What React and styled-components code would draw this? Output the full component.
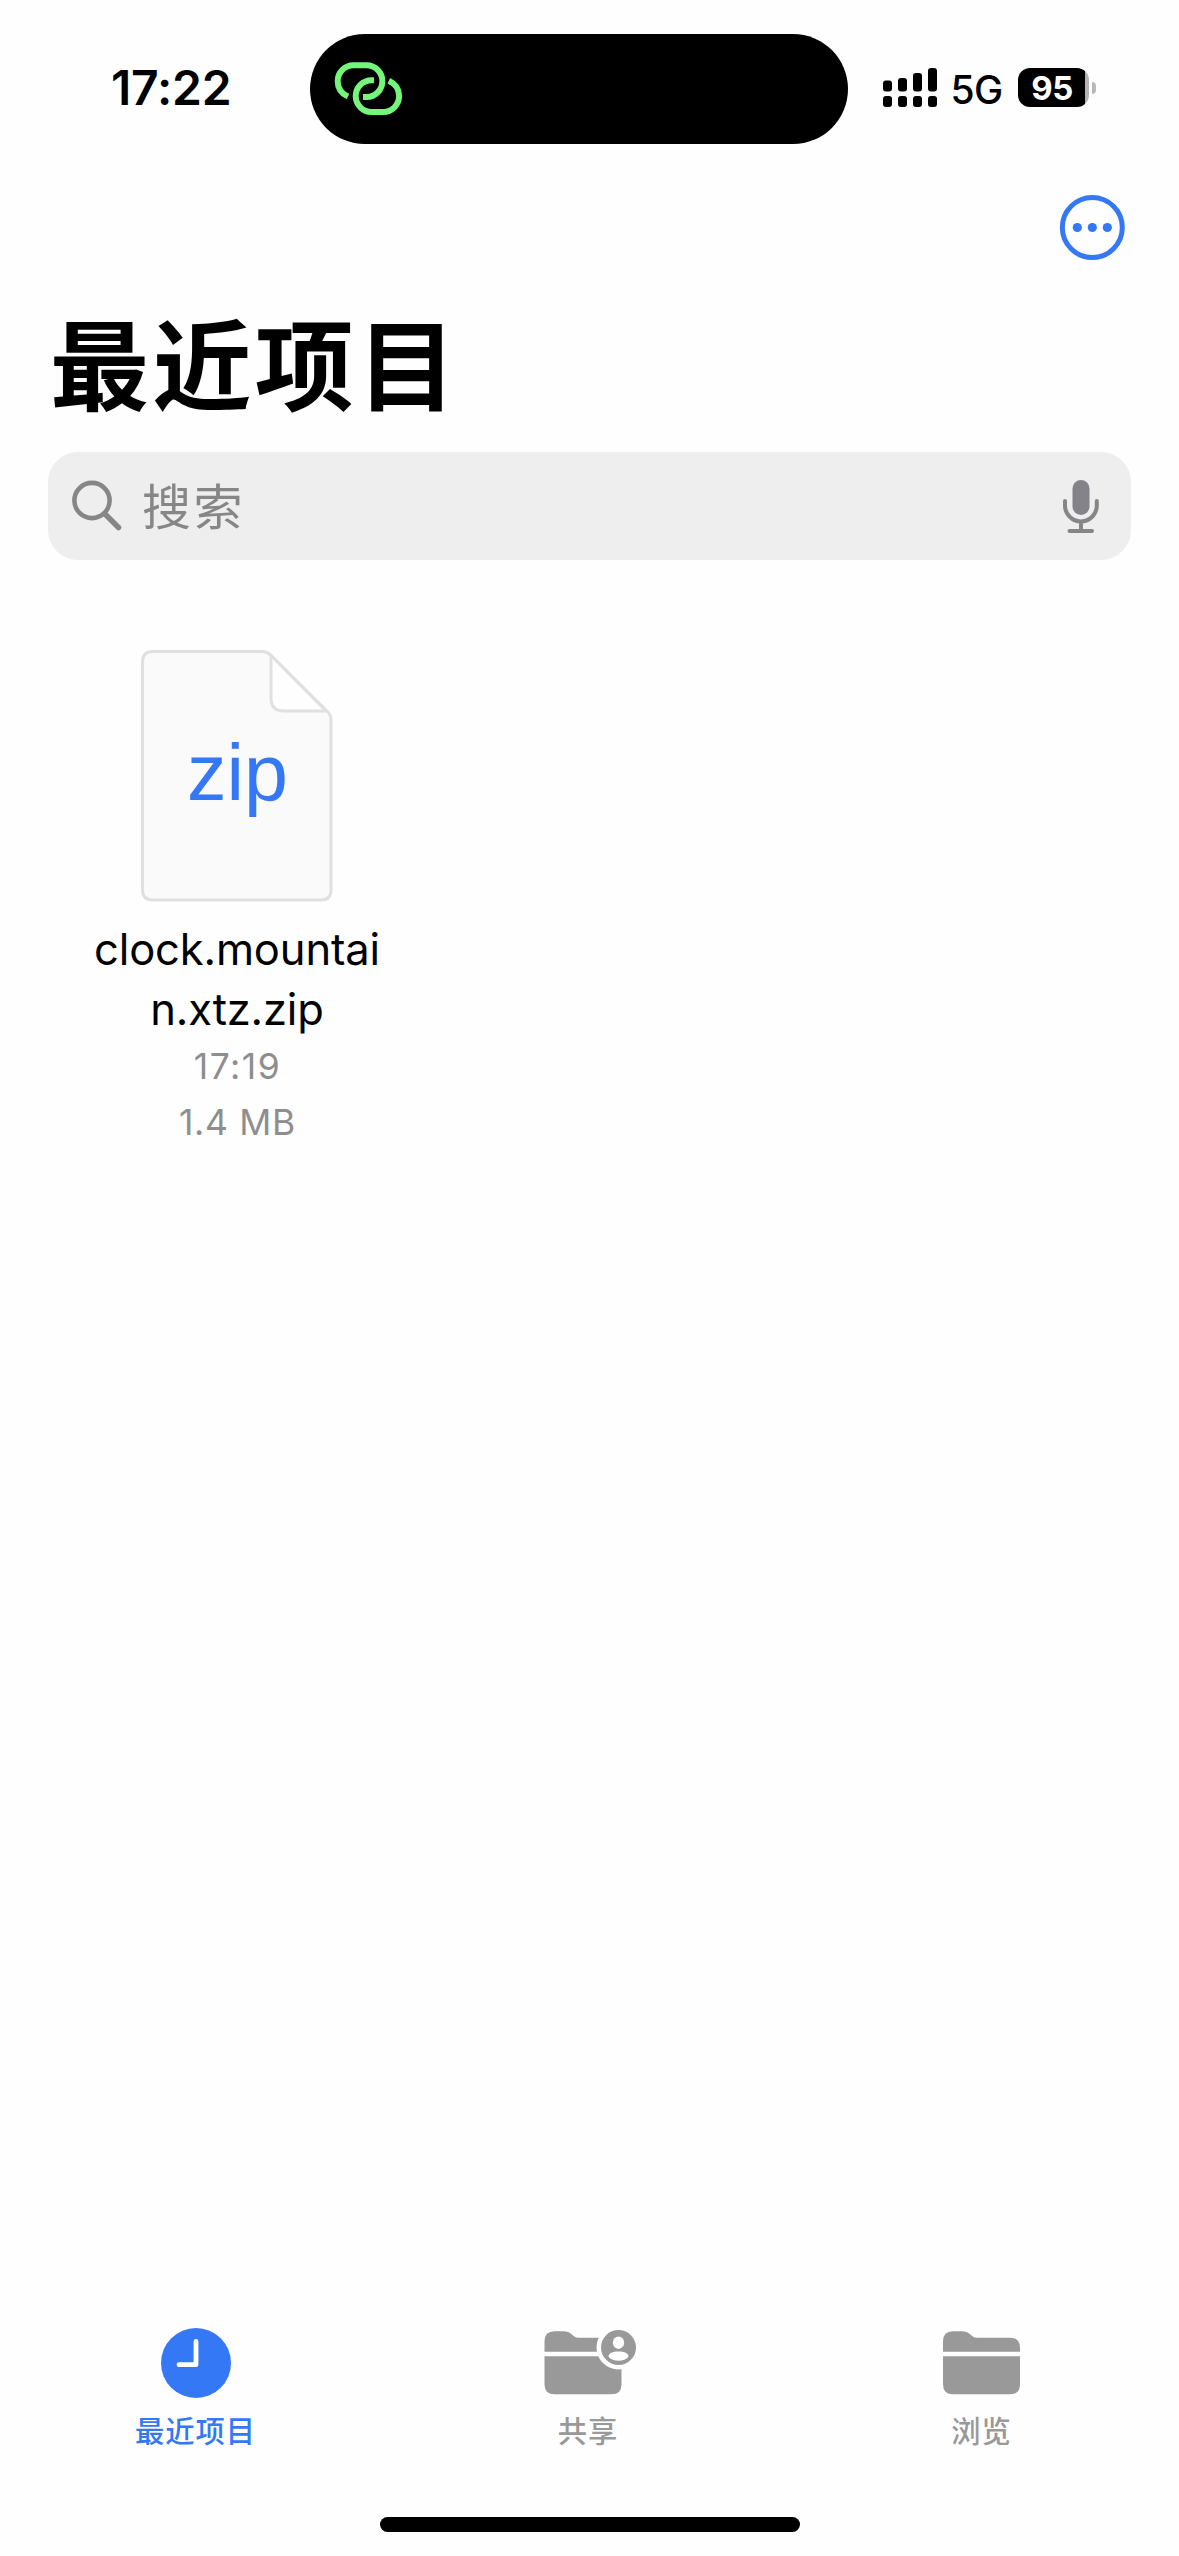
import React from "react";
import styled, { createGlobalStyle } from "styled-components";

const BLUE = "#3478f6";
const GRAY = "#999999";

const GlobalStyle = createGlobalStyle`
  * { box-sizing: border-box; }
  body { margin: 0; background: #fefefe; }
`;

const Screen = styled.div`
  width: 1179px;
  height: 2556px;
  display: flex;
  flex-direction: column;
  background: #fefefe;
  color: #000;
  font-family: Inter, "Noto Sans CJK SC", sans-serif;
  overflow: hidden;
`;

const StatusBar = styled.header`
  height: 144px;
  padding-top: 34px;
  display: grid;
  grid-template-columns: 309.5px 538px 1fr;
`;

const Time = styled.div`
  padding-left: 111px;
  font-size: 48px;
  font-weight: 600;
  line-height: 108px;
  letter-spacing: -0.2px;
`;

const Island = styled.div`
  height: 110px;
  border-radius: 55px;
  background: #000;
  padding: 26px 0 0 23.5px;
`;

const StatusRight = styled.div`
  display: flex;
  align-items: flex-start;
  padding: 34px 0 0 35.5px;
`;

const Network = styled.span`
  margin-left: 13.5px;
  width: 67.5px;
  font-size: 39px;
  font-weight: 500;
  line-height: 44px;
  letter-spacing: -0.6px;
`;

const Battery = styled.div`
  display: flex;
  align-items: center;
  gap: 3px;
`;

const BatteryBody = styled.div`
  width: 71px;
  height: 39px;
  border-radius: 12px;
  background: linear-gradient(to right, #000 67px, #b4b4b4 67px);
  color: #fff;
  font-size: 33px;
  font-weight: 700;
  line-height: 40px;
  padding-right: 3px;
  text-align: center;
  letter-spacing: -0.5px;
`;

const BatteryTip = styled.div`
  width: 4px;
  height: 12px;
  border-radius: 0 4px 4px 0;
  background: #b8b8b8;
`;

const Toolbar = styled.div`
  height: 144px;
  display: flex;
  justify-content: flex-end;
  padding: 51px 54px 0 0;
`;

const Title = styled.h1`
  margin: 0;
  height: 164px;
  padding-left: 50px;
  font-family: "Noto Sans CJK SC", sans-serif;
  font-size: 99px;
  font-weight: 700;
  line-height: 144px;
  letter-spacing: 3.4px;
`;

const SearchBar = styled.div`
  margin: 0 48px;
  height: 108px;
  border-radius: 30px;
  background: #eeeeee;
  display: flex;
  align-items: center;
  padding: 0 30px 0 22px;
`;

const Placeholder = styled.span`
  flex: 1;
  margin-left: 20px;
  color: #868686;
  font-family: "Noto Sans CJK SC", sans-serif;
  font-size: 49px;
  line-height: 104px;
  padding-bottom: 4px;
  letter-spacing: 2.5px;
`;

const Files = styled.main`
  flex: 1;
  padding: 90px 0 0 75px;
  display: flex;
  align-items: flex-start;
`;

const FileCell = styled.article`
  width: 324px;
  display: flex;
  flex-direction: column;
  align-items: center;
`;

const Thumbnail = styled.div`
  display: grid;
  place-items: center;
  > * { grid-area: 1 / 1; }
`;

const Extension = styled.span`
  color: ${BLUE};
  font-family: "Liberation Sans", sans-serif;
  font-size: 79px;
  line-height: 90px;
  padding-left: 1px;
  padding-bottom: 7px;
`;

const FileName = styled.div`
  margin-top: 17px;
  font-size: 43.5px;
  line-height: 60px;
  letter-spacing: -0.15px;
  text-align: center;
  span { display: block; }
`;

const Meta = styled.div`
  color: #8e8e8e;
  font-size: 35.5px;
  line-height: 55.5px;
  padding-left: 1px;
  letter-spacing: ${(p) => (p.$wide ? "1.5px" : "0.7px")};
`;

const TabBar = styled.nav`
  height: 198px;
  display: grid;
  grid-template-columns: 391px 394px 393px;
`;

const Tab = styled.div`
  display: flex;
  flex-direction: column;
  align-items: center;
  gap: 11px;
  color: ${(p) => (p.$active ? BLUE : GRAY)};
`;

const TabLabel = styled.span`
  font-family: "Noto Sans CJK SC", sans-serif;
  font-size: 29.3px;
  font-weight: 500;
  line-height: 39px;
  letter-spacing: 0.9px;
`;

const HomeArea = styled.footer`
  height: 39px;
  display: flex;
  justify-content: center;
`;

const HomeIndicator = styled.div`
  width: 420px;
  height: 15px;
  border-radius: 8px;
  background: #000;
`;

const LinkIcon = () => (
  <svg width="70" height="56" viewBox="333 60 70 56" fill="none" stroke="#75f67b" strokeWidth="6">
    <path d="M348 96.500C341.500 93.500 337.700 88 337.700 81.150A15.850 15.850 0 0 1 353.550 65.300H366.500A15.850 15.850 0 0 1 366.500 97H363" />
    <path d="M374 80.200H371.600A15.900 15.900 0 0 0 371.600 112H383.200A15.900 15.900 0 0 0 399.100 96.100C399.100 89.300 395.300 83.800 388.800 80.800" />
  </svg>
);

const SignalIcon = () => (
  <svg width="54" height="39" viewBox="0 0 54 39">
    {[12.5, 10, 5, 0].map((top, i) => (
      <g key={top}>
        <rect x={i * 15} y={top} width="9" height={23.5 - top} rx="3" />
        <rect x={i * 15} y="28" width="9" height="11" rx="3" />
      </g>
    ))}
  </svg>
);

const MoreIcon = () => (
  <svg width="66" height="66" viewBox="0 0 66 66" fill={BLUE}>
    <circle cx="33.300" cy="32.500" r="30" fill="none" stroke={BLUE} strokeWidth="5" />
    <circle cx="18.300" cy="32.500" r="4.600" />
    <circle cx="33.300" cy="32.500" r="4.600" />
    <circle cx="48.300" cy="32.500" r="4.600" />
  </svg>
);

const SearchIcon = () => (
  <svg width="52" height="52" viewBox="70 480 52 52" fill="none" stroke="#868686" strokeLinecap="round">
    <circle cx="92" cy="500.500" r="17.600" strokeWidth="4.600" />
    <path d="M105 514L118.500 527.500" strokeWidth="5.500" />
  </svg>
);

const MicIcon = () => (
  <svg width="40" height="56" viewBox="1061 478 40 56" fill="none" stroke="#868686" strokeWidth="4" strokeLinecap="round">
    <rect x="1072.500" y="480" width="17" height="35" rx="8.500" fill="#84838a" stroke="none" />
    <path d="M1065 501V505.500A15.800 15.800 0 0 0 1096.800 505.500V501M1081 522V531M1069.500 531H1092" />
  </svg>
);

const DocumentIcon = () => (
  <svg width="192" height="252" viewBox="1 0 192 252" fill="#fafafa" stroke="#e0e0e0" strokeWidth="3">
    <path d="M12.500 1.500H122Q127 1.500 131 5.500L186.500 60.500Q191 64.500 191 70V240Q191 250 181 250H13Q2.500 250 2.500 240V12Q2.500 1.500 12.500 1.500Z" />
    <path d="M131 5.500V48Q131 61 144 61H186Z" fill="#fefefe" />
  </svg>
);

const ClockIcon = () => (
  <svg width="72" height="80" viewBox="0 0 72 80">
    <circle cx="36" cy="44" r="35" fill={BLUE} />
    <path d="M36 22.500V45.700H19" fill="none" stroke="#fff" strokeWidth="4.800" strokeLinecap="round" strokeLinejoin="round" />
  </svg>
);

const FolderShapes = () => (
  <>
    <path d="M0 31.500V21Q0 11 10 11H19Q24 11 27 14L29.500 16Q31 17.500 35 17.500H67Q77 17.500 77 28V31.500Z" />
    <path d="M0 36H77V64Q77 74 67 74H10Q0 74 0 64Z" />
  </>
);

const FolderIcon = () => (
  <svg width="78" height="80" viewBox="0 -1.200 78 80" fill={GRAY}>
    <FolderShapes />
  </svg>
);

const SharedFolderIcon = () => (
  <svg width="98" height="80" viewBox="-5.500 -1.200 98 80" fill={GRAY}>
    <FolderShapes />
    <circle cx="74" cy="27.300" r="22" fill="#fefefe" />
    <circle cx="74" cy="27.300" r="17.500" />
    <ellipse cx="74" cy="22.500" rx="5.700" ry="6.200" fill="#fefefe" />
    <path d="M64 36.500C64 33 68 31.300 74 31.300S84 33 84 36.500C80 42 68 42 64 36.500Z" fill="#fefefe" />
  </svg>
);

export default function App() {
  return (
    <Screen>
      <GlobalStyle />
      <StatusBar>
        <Time>17:22</Time>
        <Island><LinkIcon /></Island>
        <StatusRight>
          <SignalIcon />
          <Network>5G</Network>
          <Battery>
            <BatteryBody>95</BatteryBody>
            <BatteryTip />
          </Battery>
        </StatusRight>
      </StatusBar>
      <Toolbar><MoreIcon /></Toolbar>
      <Title>最近项目</Title>
      <SearchBar>
        <SearchIcon />
        <Placeholder>搜索</Placeholder>
        <MicIcon />
      </SearchBar>
      <Files>
        <FileCell>
          <Thumbnail>
            <DocumentIcon />
            <Extension>zip</Extension>
          </Thumbnail>
          <FileName>
            <span>clock.mountai</span>
            <span>n.xtz.zip</span>
          </FileName>
          <Meta $wide>17:19</Meta>
          <Meta>1.4 MB</Meta>
        </FileCell>
      </Files>
      <TabBar>
        <Tab $active><ClockIcon /><TabLabel>最近项目</TabLabel></Tab>
        <Tab><SharedFolderIcon /><TabLabel>共享</TabLabel></Tab>
        <Tab><FolderIcon /><TabLabel>浏览</TabLabel></Tab>
      </TabBar>
      <HomeArea><HomeIndicator /></HomeArea>
    </Screen>
  );
}
